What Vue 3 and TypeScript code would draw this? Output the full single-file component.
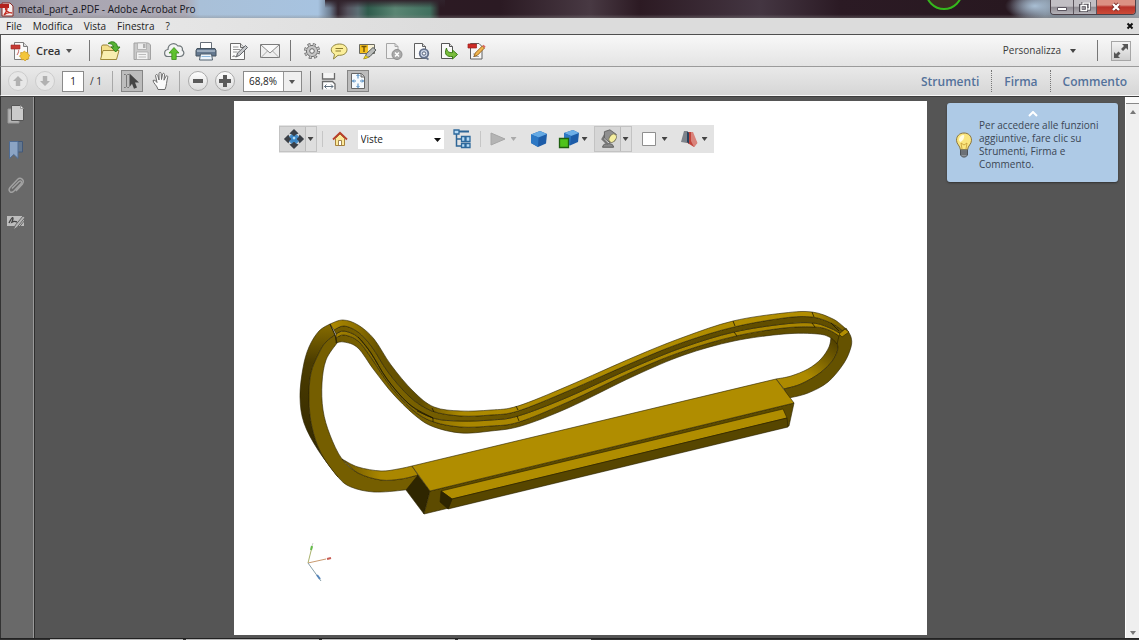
<script setup lang="ts">
import { ref } from 'vue'

type Point = [number, number]

const menus: string[] = ['File', 'Modifica', 'Vista', 'Finestra', '?']
const panes: string[] = ['Strumenti', 'Firma', 'Commento']
const pageNumber = ref('1')
const zoomLevel = ref('68,8%')
const view = ref('Viste')

/* Smooth curve through a list of points (Catmull-Rom turned into Béziers). */
function curve(points: Point[], command = 'M'): string {
  let d = `${command}${points[0].join(' ')}`
  for (let i = 0; i < points.length - 1; i++) {
    const a = points[Math.max(i - 1, 0)]
    const b = points[i]
    const c = points[i + 1]
    const e = points[Math.min(i + 2, points.length - 1)]
    const c1 = [b[0] + (c[0] - a[0]) / 6, b[1] + (c[1] - a[1]) / 6]
    const c2 = [c[0] - (e[0] - b[0]) / 6, c[1] - (e[1] - b[1]) / 6]
    d += `C${c1.map((n) => n.toFixed(1)).join(' ')} ${c2.map((n) => n.toFixed(1)).join(' ')} ${c.join(' ')}`
  }
  return d
}

function ribbon(a: Point[], b: Point[]): string {
  return `${curve(a)}${curve([...b].reverse(), 'L')}Z`
}

/* Edges of the long curved band, from its outer rim to its inner rim. */
const rim0: Point[] = [[329, 324], [342, 320], [357, 325], [373, 339], [390, 365], [412, 391], [433, 407], [460, 411], [490, 410], [517, 406], [567, 386], [633, 357], [683, 337], [732, 321], [783, 313], [811, 312], [832, 319], [844, 328]]
const rim1: Point[] = [[333, 330], [343, 326], [357, 332], [371, 347], [387, 372], [409, 397], [431, 411], [460, 416], [490, 415], [517, 411], [567, 391], [633, 362], [683, 342], [733, 327], [783, 318], [811, 317], [830, 323], [842, 331]]
const rim2: Point[] = [[335, 334], [343, 331], [357, 337], [370, 353], [386, 379], [408, 404], [432, 418], [460, 421], [490, 420], [517, 416], [567, 397], [633, 367], [683, 347], [733, 332], [783, 324], [812, 323], [829, 328], [840, 334]]
const rim3: Point[] = [[335, 338], [343, 335], [357, 341], [371, 359], [390, 387], [413, 411], [433, 422], [460, 427], [490, 426], [518, 422], [567, 402], [633, 371], [683, 351], [735, 336], [783, 328], [814, 327], [828, 330], [838, 336]]
const rim4: Point[] = [[335, 343], [343, 342], [357, 348], [373, 370], [393, 395], [416, 417], [433, 427], [460, 433], [490, 431], [520, 426], [567, 408], [633, 376], [683, 355], [733, 341], [783, 334], [817, 334], [830, 338], [836, 344]]

const leftOuter: Point[] = [[329, 324], [318, 331], [308, 347], [302, 368], [299, 397], [303, 423], [317, 450], [337, 477]]
const leftMid: Point[] = [[334, 335], [325, 342], [318, 353], [310, 373], [308, 400], [311, 427], [320, 453], [337, 477]]
const leftFace: Point[] = [...leftMid, [350, 487], [373, 492], [403, 490], [414, 487]]
const leftInner: Point[] = [[336, 343], [325, 360], [321, 383], [322, 410], [329, 435], [341, 459], [357, 473], [380, 480], [400, 479], [417, 475]]
const leftShelf: Point[] = [[341, 459], [357, 467], [380, 471], [397, 469], [411, 466]]
const leftShelfLow: Point[] = [[341, 459], [357, 473], [380, 480], [400, 479], [417, 475]]

const rightOuter: Point[] = [[845, 328], [850, 337], [850, 347], [843, 363], [827, 382], [807, 393], [788, 398]]
const rightMid: Point[] = [[832, 336], [837, 347], [832, 360], [819, 373], [800, 384], [783, 389]]
const rightInner: Point[] = [[830, 337], [828, 347], [820, 359], [807, 369], [790, 376], [775, 379]]
</script>

<template>
  <div class="window">
    <header class="titlebar">
      <svg class="app-icon" width="14" height="16" viewBox="0 0 14 16" aria-hidden="true">
        <path d="M2 2h8l3 3v10H2z" fill="#f7eeee" stroke="#8b2a25" />
        <path d="M0 3h9v4H0z" fill="#b3231d" />
        <path d="M4 14c3-4 4-8 2-7s2 5 6 5c-3-1-6 0-8 2z" fill="none" stroke="#c22c22" stroke-width="1.3" />
      </svg>
      <span class="title">metal_part_a.PDF - Adobe Acrobat Pro</span>
      <svg class="ring" width="40" height="18" viewBox="0 0 40 18" aria-hidden="true">
        <circle cx="20" cy="-9" r="18" fill="#3a2b22" stroke="#35b81c" stroke-width="2" />
      </svg>
      <div class="window-buttons">
        <button type="button" class="wb" aria-label="Riduci a icona">
          <svg width="12" height="10" viewBox="0 0 12 10"><path d="M1.500 5.500h9v3h-9z" fill="#fff" stroke="#5b5560" /></svg>
        </button>
        <button type="button" class="wb" aria-label="Ripristina">
          <svg width="12" height="10" viewBox="0 0 12 10"><path d="M4 3V1h7v6H9M1.500 3.500h6v5h-6z" fill="none" stroke="#4c4850" stroke-width="3" /><path d="M4 2.500V1h6.500v6H8.500M2 3.500h5.500v5H2z" fill="none" stroke="#fff" stroke-width="1.400" /></svg>
        </button>
        <button type="button" class="wb close" aria-label="Chiudi">
          <svg width="12" height="10" viewBox="0 0 12 10"><path d="M3 2l6 6M9 2L3 8" stroke="#7b2a24" stroke-width="4" /><path d="M3 2l6 6M9 2L3 8" stroke="#fff" stroke-width="2.400" /></svg>
        </button>
      </div>
    </header>

    <nav class="menubar" aria-label="Menu">
      <button v-for="m in menus" :key="m" type="button" class="menu">{{ m }}</button>
      <button type="button" class="doc-close" aria-label="Chiudi documento">
        <svg width="8" height="8" viewBox="0 0 8 8"><path d="M1.500 1.500l5 5M6.500 1.500l-5 5" stroke="#111" stroke-width="2" /></svg>
      </button>
    </nav>

    <div class="toolbar first">
      <button type="button" class="create">
        <svg width="20" height="20" viewBox="0 0 20 20" aria-hidden="true">
          <path d="M4.500 1.500h9l4 4v13h-13z" fill="#fafafa" stroke="#7d7d7d" />
          <path d="M13.500 1.500v4h4" fill="#ddd" stroke="#7d7d7d" />
          <path d="M1 4h9v4H1z" fill="#c63a34" stroke="#9c2a26" stroke-width=".6" />
          <path d="M7 14c2-3 2-5 1-5" fill="none" stroke="#c9605b" />
          <path d="M14.500 10l1.300 1.600 2-.3.200 2L20 14.500l-1.500 1.500.3 2-2.100.3-1.500 1.600-1.700-1.300-2 .2-.4-2L9.500 15.200l1.300-1.600-.2-2 2.100-.1z" fill="#f3c63a" stroke="#c79422" stroke-width=".7" />
        </svg>
        <span>Crea</span>
        <svg class="caret" width="6" height="4" viewBox="0 0 6 4"><path d="M0 0h6L3 4z" fill="#555" /></svg>
      </button>
      <span class="sep"></span>
      <div class="group file-group">
        <button type="button" class="tool" aria-label="Apri">
          <svg width="22" height="22" viewBox="0 0 22 22">
            <path d="M2.500 19.500V6.500l1-1.500h5l2 2h7v12z" fill="#f3df8c" stroke="#9a8339" />
            <path d="M1.500 19.500l2.500-9h16l-2.500 9z" fill="#f9eeb0" stroke="#a08a3c" />
            <path d="M9 3.500C13 0 18 2 18.500 7h2.500l-4.300 5L12 7h2.500C14 4.500 12 3.500 9 3.500z" fill="#55b233" stroke="#2c7b17" stroke-width=".9" />
          </svg>
        </button>
        <button type="button" class="tool" aria-label="Salva">
          <svg width="22" height="22" viewBox="0 0 22 22">
            <path d="M3 3h14.500L19.500 5v14.500H3z" fill="#c9c9c9" stroke="#a2a2a2" />
            <path d="M6.500 3h9v6.500h-9z" fill="#ededed" stroke="#aaa" stroke-width=".8" /><path d="M12 4h2.500v4H12z" fill="#b0b0b0" />
            <path d="M5.500 12h11.500v7.500H5.500z" fill="#f2f2f2" stroke="#aaa" stroke-width=".8" /><path d="M7.500 14.500h7.500M7.500 17h7.500" stroke="#bcbcbc" />
          </svg>
        </button>
        <button type="button" class="tool" aria-label="Carica">
          <svg width="22" height="22" viewBox="0 0 22 22">
            <path d="M5 16.500C.5 16.500.5 10 5 9.500 5 4 11.500 1.500 15 6c3-.5 5 1.500 4.300 4.200 2.500 1.500 2 6.300-2.300 6.300z" fill="#f2f3f3" stroke="#6e7679" stroke-width="1.200" />
            <path d="M11 7.500l5 5.500h-2.800v6.500H8.800V13H6z" fill="#5fc22f" stroke="#3a8d18" stroke-width=".8" />
          </svg>
        </button>
        <button type="button" class="tool" aria-label="Stampa">
          <svg width="22" height="22" viewBox="0 0 22 22">
            <path d="M5.500 9V2.500h11V9" fill="#fff" stroke="#666e78" />
            <path d="M2 8.500h18l1 2v5.500H1v-5.500z" fill="#64788f" stroke="#45535f" /><path d="M2 11h18" stroke="#aebccb" stroke-width="1.500" />
            <path d="M5.500 14h11l1 6H4.500z" fill="#eef5fb" stroke="#51606e" /><path d="M6.500 16.500h9" stroke="#8cb8df" />
          </svg>
        </button>
        <button type="button" class="tool" aria-label="Modifica testo">
          <svg width="22" height="22" viewBox="0 0 22 22">
            <path d="M3.500 3.500h10l4 4v12h-14z" fill="#fbfbfb" stroke="#6b6b6b" /><path d="M13.500 3.500v4h4" fill="#ddd" stroke="#6b6b6b" />
            <path d="M6 7h5.500M6 9.500h7M6 12h4.500" stroke="#949494" /><path d="M5.500 17c2-3 2.500 1.500 5-1" fill="none" stroke="#555" />
            <path d="M9.500 16.500l1-3.500 8-7.500 2 2-8 8z" fill="#c4c6c9" stroke="#55585c" stroke-width=".9" />
          </svg>
        </button>
        <button type="button" class="tool" aria-label="Invia per e-mail">
          <svg width="22" height="22" viewBox="0 0 22 22">
            <path d="M1.500 4.500h19v13h-19z" fill="#efefef" stroke="#7b7b7b" />
            <path d="M2 17.500l7-7M20 17.500l-7-7" stroke="#a9a9a9" /><path d="M2 5l9 8 9-8" fill="#f9f9f9" stroke="#8a8a8a" />
          </svg>
        </button>
      </div>
      <span class="sep"></span>
      <div class="group quick-group">
        <button type="button" class="tool" aria-label="Impostazioni">
          <svg width="20" height="20" viewBox="0 0 20 20">
            <circle cx="10" cy="10" r="6.400" fill="none" stroke="#707070" stroke-width="3.400" stroke-dasharray="2.800 2.227" />
            <circle cx="10" cy="10" r="5.600" fill="#c6c6c6" stroke="#707070" /><circle cx="10" cy="10" r="6.400" fill="none" stroke="#c6c6c6" stroke-width="2" stroke-dasharray="1.400 3.627" stroke-dashoffset="-.7" /><circle cx="10" cy="10" r="2.300" fill="#f4f4f4" stroke="#666" />
          </svg>
        </button>
        <button type="button" class="tool" aria-label="Nota">
          <svg width="20" height="20" viewBox="0 0 20 20">
            <path d="M10.500 3c4.500 0 7.500 2.500 7.500 5.700s-3 5.600-7.500 5.600H9L4.500 18l1-4.700C3.500 12.200 2.300 10.700 2.300 8.700 2.300 5.500 6 3 10.500 3z" fill="#fbee9a" stroke="#8e8440" />
            <path d="M6.500 7.500h7.500M6.500 10h5.500" stroke="#8a7b2e" />
          </svg>
        </button>
        <button type="button" class="tool" aria-label="Evidenzia">
          <svg width="20" height="20" viewBox="0 0 20 20">
            <path d="M2.500 3.500h15v9h-15z" fill="#f6f0d5" stroke="#6a6a62" /><path d="M3 4h8v8H3z" fill="#f4c01e" /><path d="M4.500 5.500h5M7 5.500V11" stroke="#6e5205" stroke-width="1.400" />
            <path d="M7.500 17.500l2-5 6.500-6 3 2.500-6 6.500z" fill="#b9bbb9" stroke="#565b5b" /><path d="M6.500 18l2-3.500 3 2z" fill="#f1dc20" stroke="#a49112" stroke-width=".6" />
          </svg>
        </button>
        <button type="button" class="tool" aria-label="Elimina pagina">
          <svg width="20" height="20" viewBox="0 0 20 20">
            <path d="M2.500 2.500h8.500l3 3v12h-11.500z" fill="#f1f1f1" stroke="#a6a6a6" /><path d="M11 2.500v3h3" fill="none" stroke="#a6a6a6" />
            <circle cx="13" cy="13.500" r="5" fill="#a9a9a9" stroke="#8e8e8e" /><path d="M11 11.500l4 4M15 11.500l-4 4" stroke="#fff" stroke-width="1.500" />
          </svg>
        </button>
        <button type="button" class="tool" aria-label="Azione guidata">
          <svg width="20" height="20" viewBox="0 0 20 20">
            <path d="M3.500 2.500h8l3 3v12h-11z" fill="#fafafa" stroke="#606060" /><path d="M11.500 2.500v3h3" fill="#ddd" stroke="#606060" />
            <circle cx="13" cy="12.500" r="4.300" fill="#ccd6e8" stroke="#65728c" stroke-width="1.800" /><circle cx="13" cy="12.500" r="1.700" fill="#fff" stroke="#55617a" /><path d="M14 16l3.500 2.500" stroke="#65728c" stroke-width="1.600" />
          </svg>
        </button>
        <button type="button" class="tool" aria-label="Esporta">
          <svg width="20" height="20" viewBox="0 0 20 20">
            <path d="M2.500 2.500h8l3 3v12h-11z" fill="#fafafa" stroke="#555" /><path d="M10.500 2.500v3h3" fill="#ddd" stroke="#555" />
            <path d="M7.500 7c-3 7 1 9 6 8.500V18l5-4.500-5-4.500v2.500C10 12 8 10.500 7.500 7z" fill="#79bd3c" stroke="#3b7a17" />
          </svg>
        </button>
        <button type="button" class="tool" aria-label="Modifica PDF">
          <svg width="20" height="20" viewBox="0 0 20 20">
            <path d="M4.500 2.500h8.500l3 3v12.500H4.500z" fill="#f7f7f7" stroke="#606060" /><path d="M2 3h8.500v4H2z" fill="#ce2b26" stroke="#99211d" stroke-width=".7" />
            <path d="M7 13h4M7 15.500h6" stroke="#aaa" /><path d="M8 15.500l1.300-3.500 7-7 2.200 2-7 7.200z" fill="#f0b44c" stroke="#925f1a" stroke-width=".9" /><path d="M16.300 5l1.300-1.200 2 2L18.500 7z" fill="#d9655f" />
          </svg>
        </button>
      </div>
      <button type="button" class="customize">
        <span>Personalizza</span>
        <svg width="6" height="4" viewBox="0 0 6 4"><path d="M0 0h6L3 4z" fill="#444" /></svg>
      </button>
      <span class="sep"></span>
      <button type="button" class="expand" aria-label="Modalità di lettura">
        <svg width="18" height="18" viewBox="0 0 18 18"><path d="M10 2h6v6l-2-2-3 3-2-2 3-3zM8 16H2v-6l2 2 2.500-2.500 2 2L6 14z" fill="#565656" /></svg>
      </button>
    </div>

    <div class="toolbar second">
      <button type="button" class="round off" aria-label="Pagina precedente">
        <svg width="12" height="12" viewBox="0 0 12 12"><path d="M6 1l5 5H8.200v5H3.800V6H1z" fill="#b1b1b1" /></svg>
      </button>
      <button type="button" class="round off" aria-label="Pagina successiva">
        <svg width="12" height="12" viewBox="0 0 12 12"><path d="M6 11l5-5H8.200V1H3.800v5H1z" fill="#b1b1b1" /></svg>
      </button>
      <input v-model="pageNumber" class="page-input" type="text" aria-label="Pagina" />
      <span class="page-count">/ 1</span>
      <span class="sep light"></span>
      <button type="button" class="pressed" aria-label="Strumento Selezione">
        <svg width="18" height="18" viewBox="0 0 18 18"><path d="M1 2.500h1.500l1 1 1-1H6M3.500 3v12M1 15.500h1.500l1-1 1 1H6" fill="none" stroke="#777" /><path d="M6.500 1.500l9.500 9h-4l2 5-3 1.300-2-5L6.500 15z" fill="#444" /></svg>
      </button>
      <button type="button" class="hand" aria-label="Strumento Mano">
        <svg width="18" height="20" viewBox="0 0 18 20"><path d="M6 18.500C5.500 15 1 12 1 9.500c1.500-1 3 .5 4 2L3.500 4.500c.5-1.500 2-1 2.300 0L7 9V2.500c.3-1.500 2-1.500 2.200 0l.3 6 1-5.500c.7-1.200 2-.8 2 .5L12 9.200l2-4c.8-1 2-.3 1.700 1-1 3.500-1.200 9-2.700 12.300z" fill="#fbfbfb" stroke="#6c6c6c" /></svg>
      </button>
      <span class="sep light"></span>
      <button type="button" class="round" aria-label="Zoom indietro">
        <svg width="14" height="14" viewBox="0 0 14 14"><path d="M2 5h10v4H2z" fill="#5a5a5a" /></svg>
      </button>
      <button type="button" class="round" aria-label="Zoom avanti">
        <svg width="14" height="14" viewBox="0 0 14 14"><path d="M5 1h4v4h4v4H9v4H5V9H1V5h4z" fill="#5a5a5a" /></svg>
      </button>
      <span class="zoom-box">
        <select v-model="zoomLevel" aria-label="Livello di zoom">
          <option>68,8%</option>
          <option>100%</option>
        </select>
        <svg width="6" height="4" viewBox="0 0 6 4" aria-hidden="true"><path d="M0 0h6L3 4z" fill="#555" /></svg>
      </span>
      <span class="sep"></span>
      <button type="button" class="fit" aria-label="Adatta alla larghezza">
        <svg width="18" height="20" viewBox="0 0 18 20">
          <path d="M2.500 2v6h12V2" fill="#f4f4f4" stroke="#6a6a6a" stroke-width="1.300" /><path d="M2.500 18.500v-8h10l2.500 2.500v5.500" fill="#fff" stroke="#6a6a6a" stroke-width="1.300" /><path d="M4.500 15.500h8.500M6.500 13.500l-2 2 2 2M11 13.500l2 2-2 2" fill="none" stroke="#62717f" />
        </svg>
      </button>
      <button type="button" class="pressed" aria-label="Adatta pagina">
        <svg width="18" height="18" viewBox="0 0 18 18">
          <path d="M2.500 1.500h10l3 3v12h-13z" fill="#f6fafd" stroke="#666" /><path d="M12 1.500v3.500h3.500" fill="#ccc" stroke="#666" />
          <path d="M9 2.500v4M7.500 4L9 2.500 10.500 4M9 15.500v-4M7.500 14L9 15.500l1.500-1.500M3.500 9h3.500M5 7.500L3.500 9 5 10.500M14.500 9H11M13 7.500L14.500 9 13 10.500" fill="none" stroke="#4684bd" />
        </svg>
      </button>
      <div class="panes">
        <button v-for="p in panes" :key="p" type="button" class="pane">{{ p }}</button>
      </div>
    </div>

    <main class="work">
      <aside class="rail" aria-label="Pannelli di navigazione">
        <button type="button" aria-label="Miniature pagine">
          <svg width="20" height="20" viewBox="0 0 20 20"><path d="M2 5h11v14H2z" fill="#b3b3b3" stroke="#999" /><path d="M5.500 1.500h9l3 3v12h-12z" fill="#cbcbcb" stroke="#565656" /><path d="M14.500 1.500v3h3" fill="#eee" stroke="#999" /></svg>
        </button>
        <button type="button" aria-label="Segnalibri">
          <svg width="20" height="20" viewBox="0 0 20 20"><path d="M9 1.500h7.500V12H9z" fill="#63778f" stroke="#425878" /><path d="M3.500 1.500H12v17l-4.200-4-4.300 4z" fill="#8ba4c4" stroke="#4f6c94" /></svg>
        </button>
        <button type="button" aria-label="Allegati">
          <svg width="20" height="20" viewBox="0 0 20 20"><path d="M6 12.500l7-7c2-1.500 3.500.5 2 2L8 15c-3 3-6.500 0-4-3.500l7.500-8c3-3 7.500.5 5 4.500L10 15" fill="none" stroke="#a2a2a2" stroke-width="1.400" /></svg>
        </button>
        <button type="button" aria-label="Firme">
          <svg width="20" height="20" viewBox="0 0 20 20"><path d="M1 4h17v10H1z" fill="#bdbdbd" /><path d="M3 11c4-8 5-6 3-1 2-1 3-1 5 0" fill="none" stroke="#444" stroke-width="1.400" /><path d="M7 18l2.500-5L17 4l2 1.500-8 10zM11 18l8-10" fill="#b5b5b5" stroke="#666" /></svg>
        </button>
      </aside>

      <section class="document">
        <article class="page">
          <svg class="model" viewBox="233 101 693 534" role="img" aria-label="Modello 3D">
            <defs>
              <linearGradient id="band-light" gradientUnits="userSpaceOnUse" x1="330" y1="0" x2="850" y2="0">
                <stop offset="0" stop-color="#ad8900" /><stop offset=".05" stop-color="#8d7000" /><stop offset=".09" stop-color="#695400" />
                <stop offset=".17" stop-color="#604d00" /><stop offset=".25" stop-color="#ac8900" /><stop offset=".92" stop-color="#b28e00" /><stop offset="1" stop-color="#6b5600" />
              </linearGradient>
              <linearGradient id="band-inner" gradientUnits="userSpaceOnUse" x1="330" y1="0" x2="850" y2="0">
                <stop offset="0" stop-color="#aa8700" /><stop offset=".06" stop-color="#856a00" /><stop offset=".16" stop-color="#806600" />
                <stop offset=".26" stop-color="#aa8700" /><stop offset="1" stop-color="#a98600" />
              </linearGradient>
              <linearGradient id="band-dark" gradientUnits="userSpaceOnUse" x1="330" y1="0" x2="850" y2="0">
                <stop offset="0" stop-color="#6f5900" /><stop offset=".1" stop-color="#7d6400" /><stop offset=".25" stop-color="#705a00" /><stop offset=".5" stop-color="#5d4a00" /><stop offset="1" stop-color="#624f00" />
              </linearGradient>
              <linearGradient id="left-side" gradientUnits="userSpaceOnUse" x1="0" y1="324" x2="0" y2="477">
                <stop offset="0" stop-color="#876c00" /><stop offset=".25" stop-color="#4b3c00" /><stop offset=".6" stop-color="#3c3000" /><stop offset="1" stop-color="#2e2500" />
              </linearGradient>
              <linearGradient id="right-side" gradientUnits="userSpaceOnUse" x1="836" y1="338" x2="798" y2="385">
                <stop offset="0" stop-color="#4b3c00" /><stop offset=".4" stop-color="#796100" /><stop offset=".8" stop-color="#ad8a00" />
              </linearGradient>
              <linearGradient id="shelf" gradientUnits="userSpaceOnUse" x1="341" y1="0" x2="380" y2="0">
                <stop offset="0" stop-color="#6b5500" /><stop offset="1" stop-color="#aa8700" />
              </linearGradient>
            </defs>

            <g class="solid">
              <path :d="ribbon(rightInner, rightMid)" fill="url(#right-side)" />
              <path :d="ribbon(rightOuter, rightMid)" fill="#655200" />
              <path :d="ribbon(leftOuter, leftMid)" fill="url(#left-side)" />
              <path :d="ribbon(leftFace, leftInner)" fill="#755e00" />
              <path :d="ribbon(leftShelf, leftShelfLow)" fill="url(#shelf)" />
              <path :d="ribbon(rim3, rim4)" fill="url(#band-dark)" />
              <path :d="ribbon(rim2, rim3)" fill="url(#band-inner)" />
              <path :d="ribbon(rim1, rim2)" fill="url(#band-dark)" />
              <path :d="ribbon(rim0, rim1)" fill="url(#band-light)" />
              <path d="M838 334l6-5 4 3-7 5z" fill="#b18d00" />
            </g>
            <g class="edges">
              <path :d="curve(rim2.slice(2, 7))" />
              <path d="M329 324l5 11 2 8M431 408l2 4M416 411l16 7v4M515 406l2 4M516 416l2 5M732 321l2 5M733 332l3 4M811 312l2 5M811 323l3 4M830 323l8 8" />
            </g>

            <g class="solid">
              <path d="M405 490l12-15 12 16-6 23z" fill="#2f2600" />
              <path d="M429 491l364-88-5 23-365 88z" fill="#5d4b00" />
              <path d="M411 466l364-87 18 24-364 88z" fill="#b08d00" />
              <path d="M440 491l342-82 4 9-335 81z" fill="#b08d00" />
              <path d="M451 499l335-81 1 9-340 82z" fill="#574600" />
              <path d="M440 491l11 8-4 10-8-7z" fill="#2e2500" />
            </g>

            <g class="axes">
              <path d="M307 563l4-16" stroke="#a9b26c" /><path d="M310 550l1-4" stroke="#65bb4b" stroke-width="2" />
              <path d="M311 546l1-3" stroke="#ccc" />
              <path d="M307 563l18-4" stroke="#c99a70" /><path d="M326 559l4-1" stroke="#c85c54" stroke-width="2" />
              <path d="M307 563l13 18" stroke="#879fa8" /><path d="M316 575l3 4" stroke="#5686bb" stroke-width="2" />
            </g>
          </svg>

          <div class="toolbar3d" role="toolbar" aria-label="Strumenti 3D">
            <button type="button" class="split" aria-label="Ruota">
              <svg width="22" height="22" viewBox="0 0 24 24">
                <path d="M4 12L12 4l8 8-8 8z" fill="#4a90cb" />
                <path d="M12 1l5 5-3 1-2 3-2-3-3-1zM12 23l5-5-3-1-2-3-2 3-3 1zM1 12l5-5 1 3 3 2-3 2-1 3zM23 12l-5-5-1 3-3 2 3 2 1 3z" fill="#3a3f46" />
                <circle cx="12" cy="12" r="3.500" fill="#3a86c6" /><circle cx="12" cy="11" r="1.500" fill="#b3ddf5" />
              </svg>
              <i class="tri"></i>
            </button>
            <span class="bar"></span>
            <button type="button" class="flat home" aria-label="Vista predefinita">
              <svg width="16" height="16" viewBox="0 0 16 16"><path d="M3.500 7.500L8 3l4.500 4.500v7h-9z" fill="#fbe99a" stroke="#a9823a" /><path d="M1 8.500L8 1.800l7 6.700" fill="none" stroke="#b93f2b" stroke-width="1.800" /><path d="M6.500 9.500h3v5h-3z" fill="#fff" stroke="#8c6a31" stroke-width=".8" /></svg>
            </button>
            <span class="views">
              <select v-model="view" aria-label="Viste">
                <option>Viste</option>
              </select>
              <svg width="7" height="4" viewBox="0 0 7 4" aria-hidden="true"><path d="M0 0h7L3.500 4z" fill="#111" /></svg>
            </span>
            <button type="button" class="flat tree" aria-label="Struttura del modello">
              <svg width="20" height="20" viewBox="0 0 20 20">
                <path d="M4.500 4v13h7M4.500 10h7" fill="none" stroke="#2d6596" stroke-width="1.500" /><path d="M4 2.500h13" stroke="#2d6596" stroke-width="2" />
                <path d="M2 1h5v4H2zM9.500 7.500H13v5H9.500zM14 7.500h4v5h-4zM9.500 14.500H13v4H9.500zM14 14.500h4v4h-4z" fill="#b7dbf5" stroke="#2e699c" stroke-width="1.300" />
              </svg>
            </button>
            <span class="bar"></span>
            <button type="button" class="flat play" aria-label="Riproduci animazione">
              <svg width="16" height="14" viewBox="0 0 16 14"><path d="M1 1l14 6-14 6z" fill="#b4b4b4" stroke="#a6a6a6" /></svg>
              <i class="tri dim"></i>
            </button>
            <button type="button" class="flat cube" aria-label="Proiezione">
              <svg width="18" height="18" viewBox="0 0 18 18"><path d="M1 4.500L10 1l7 3-1 9.500L8 17l-7-4z" fill="#1d5ca8" /><path d="M1 4.500L10 1l7 3-8.500 3.500z" fill="#64a9e4" /><path d="M1 4.500l7.500 3L8 17l-7-4z" fill="#2d78c4" /></svg>
            </button>
            <button type="button" class="flat render" aria-label="Modalità di rendering">
              <svg width="22" height="20" viewBox="0 0 22 20"><path d="M6 4l9-3 6 3-1 9-8 3.500L6 13z" fill="#1d5ca8" /><path d="M6 4l9-3 6 3-8 3z" fill="#6dafe8" /><path d="M6 4l7 3-1 9.500L6 13z" fill="#2d78c4" /><path d="M1.500 9.500h9v9h-9z" fill="#4fc31c" stroke="#1f5f10" stroke-width="1.300" /></svg>
              <i class="tri"></i>
            </button>
            <button type="button" class="split lamp" aria-label="Illuminazione">
              <svg width="22" height="22" viewBox="0 0 24 24">
                <path d="M5 21c0-3 3-4 6-4s6 1 6 4z" fill="#8a8a8a" stroke="#5a5a5a" /><path d="M11 18l-6-6 3-5" fill="none" stroke="#757575" stroke-width="2.500" />
                <path d="M7 4l6-2 7 5-7 9-6-5z" fill="#8f8f8f" stroke="#606060" /><ellipse cx="16" cy="11" rx="3.500" ry="5" transform="rotate(35 16 11)" fill="#f5ef9f" stroke="#77735a" />
              </svg>
              <i class="tri"></i>
            </button>
            <button type="button" class="flat swatch" aria-label="Colore di sfondo">
              <svg width="14" height="14" viewBox="0 0 14 14"><path d="M.5.5h13v13H.5z" fill="#fff" stroke="#8f8f8f" /></svg>
              <i class="tri"></i>
            </button>
            <button type="button" class="flat section" aria-label="Sezione trasversale">
              <svg width="18" height="18" viewBox="0 0 18 18"><path d="M6 2l6 0 5 11-3 4-8-5z" fill="#c2433a" /><path d="M11 2h2l4.500 11-3.500 4-3-6z" fill="#d9837b" /><path d="M4 1h3v12l-6-1z" fill="#7d838b" /><path d="M7 1l2 2v11l-2-2z" fill="#27425e" /></svg>
              <i class="tri"></i>
            </button>
          </div>
        </article>

        <aside class="tip">
          <svg class="tip-arrow" width="10" height="6" viewBox="0 0 10 6" aria-hidden="true"><path d="M1 5l4-4 4 4" fill="none" stroke="#fff" stroke-width="2" /></svg>
          <svg class="bulb" width="18" height="26" viewBox="0 0 18 26" aria-hidden="true">
            <path d="M9 1c4.500 0 7.500 3 7.500 7.300 0 4-3.500 5-4 9.700h-7C5 13.300 1.500 12.300 1.500 8.300 1.500 4 4.500 1 9 1z" fill="#fae67f" stroke="#8a7540" />
            <path d="M4 8c0-3 2-5 5-5 1 3-2 7-4 7z" fill="#fffbe0" /><path d="M7 17l-1-6 3 2 3-2-1 6" fill="none" stroke="#c49c35" stroke-width=".8" />
            <path d="M5.500 18h7v5l-2 2h-3l-2-2z" fill="#8f9499" stroke="#4d5359" /><path d="M5.500 20h7M5.500 22h7" stroke="#484d52" />
          </svg>
          <p>Per accedere alle funzioni aggiuntive, fare clic su Strumenti, Firma e Commento.</p>
        </aside>
      </section>

      <div class="scroll" aria-hidden="true">
        <span class="scroll-split"></span>
        <svg width="6" height="4" viewBox="0 0 6 4"><path d="M0 4h6L3 0z" fill="#777" /></svg>
        <svg class="down" width="6" height="4" viewBox="0 0 6 4"><path d="M0 0h6L3 4z" fill="#777" /></svg>
      </div>
    </main>
    <footer class="taskbar"><span></span><span></span><span></span><span></span></footer>
  </div>
</template>

<style>
body {
  margin: 0;
  overflow: hidden;
}
</style>

<style scoped>
.window {
  display: flex;
  flex-direction: column;
  height: 100vh;
  background: #555;
  color: #333;
  font: 10px/13px "Open Sans", "Noto Sans", sans-serif;
}
.window *,
.window *::before {
  box-sizing: border-box;
}
button {
  display: flex;
  align-items: center;
  justify-content: center;
  margin: 0;
  padding: 0;
  border: 0;
  background: none;
  color: inherit;
  font: inherit;
  flex: none;
}
svg {
  display: block;
  flex: none;
}
.titlebar {
  position: relative;
  display: flex;
  align-items: center;
  height: 18px;
  flex: none;
  padding-right: 3px;
  background:
    linear-gradient(#0000 80%, #8886),
    linear-gradient(#30222b, #30222b00) 325px 0 / 120px 8px no-repeat,
    radial-gradient(ellipse 30px 14px at 1035px 6px, #a9bfd4, #0000),
    linear-gradient(90deg, #948f9b 0, #aaa6b1 60px, #aba9b5 185px, #a9c0d8 200px, #a7c3e0 318px, #6d7d90 330px, #34262f 338px, #56545f 348px, #5b6d73 358px, #2f5b4c 368px, #5a8573 395px, #41705f 430px, #2c1a23 440px, #2b1a23 500px, #483943 590px, #2c1a23 640px, #443642 760px, #2b1a24 840px, #281820 1010px, #78828f 1045px, #9aa0a8 100%);
}
.app-icon {
  margin-right: 4px;
}
.title {
  color: #14141c;
}
.ring {
  position: absolute;
  top: 0;
  right: 175px;
}
.window-buttons {
  display: flex;
  align-self: flex-start;
  margin-left: auto;
  height: 15px;
  border: 1px solid #4a4048;
  border-top: 0;
  border-radius: 0 0 4px 4px;
  overflow: hidden;
}
.wb {
  width: 23px;
  background: linear-gradient(#c2bfc4 0 45%, #8f8b92 50%, #b5b2b8);
  border-right: 1px solid #5b545c;
}
.wb.close {
  width: 38px;
  border: 0;
  background: linear-gradient(#dc9183 0 35%, #b9332a 50%, #cb4a37);
}
.menubar {
  display: flex;
  align-items: center;
  gap: 11px;
  height: 17px;
  flex: none;
  padding: 0 5px 0 6px;
  background: linear-gradient(90deg, #ebebeb, #dcdcdc 40%);
  border-bottom: 1px solid #4f4f4f;
  color: #222;
}
.doc-close {
  margin-left: auto;
}
.toolbar {
  display: flex;
  align-items: center;
  flex: none;
  border-left: 1px solid #555;
}
.toolbar.first {
  height: 32px;
  padding: 0 8px 0 9px;
  background: linear-gradient(#f8f8f8, #e4e4e4);
  border-bottom: 1px solid #9b9b9b;
}
.toolbar.second {
  height: 29px;
  padding: 0 12px 0 7px;
  background: linear-gradient(#e9e9e9, #d6d6d6);
  border-bottom: 1px solid #f8f8f8;
}
.sep {
  width: 1px;
  height: 21px;
  flex: none;
  background: #777;
}
.sep.light {
  background: #a8a8a8;
}
.create {
  width: 79px;
  justify-content: flex-start;
  gap: 6px;
  font-size: 11px;
  font-weight: 600;
}
.group {
  display: grid;
}
.group .tool {
  width: 100%;
}
.file-group {
  grid-template-columns: repeat(6, 32px);
  margin: 0 4px;
}
.quick-group {
  width: 192px;
  grid-template-columns: repeat(7, 1fr);
  margin-left: 7px;
}
.customize {
  margin: 0 21px 0 auto;
  gap: 9px;
  color: #3a3a3a;
}
.expand {
  width: 20px;
  height: 20px;
  margin-left: 13px;
  border: 1px solid #a6a6a6;
  background: linear-gradient(#f3f3f3, #cfcfcf);
}
.round {
  width: 20px;
  height: 20px;
  margin-right: 7px;
  border: 1px solid #aaa;
  border-radius: 50%;
  background: linear-gradient(#fdfdfd, #dcdcdc);
}
.round.off {
  border-color: #ccc;
  background: #e7e7e7;
}
.sep + .round {
  margin-left: 8px;
}
.page-input {
  width: 22px;
  height: 21px;
  padding: 0;
  border: 1px solid #8a8a8a;
  background: #fff;
  color: #222;
  font: inherit;
  text-align: center;
}
.page-count {
  width: 22px;
  margin-left: 6px;
}
.pressed {
  width: 22px;
  height: 22px;
  border: 1px solid #858585;
  background: #bcbcbc;
}
.sep + .pressed {
  margin-left: 8px;
}
.hand {
  width: 36px;
}
.zoom-box {
  position: relative;
  width: 59px;
  height: 21px;
  margin: 0 8px 0 1px;
}
select {
  width: 100%;
  height: 100%;
  margin: 0;
  appearance: none;
  border-radius: 0;
  background: #fff;
  color: #222;
  font: inherit;
}
.zoom-box select {
  padding: 0 0 0 5px;
  border: 1px solid #8a8a8a;
}
.zoom-box::before {
  content: "";
  position: absolute;
  inset: 1px 1px 1px auto;
  width: 18px;
  background: #efefef;
  border-left: 1px solid #999;
  pointer-events: none;
}
.zoom-box svg {
  position: absolute;
  right: 7px;
  top: 9px;
  pointer-events: none;
}
.fit {
  width: 36px;
}
.panes {
  display: flex;
  margin-left: auto;
}
.pane {
  height: 22px;
  padding: 0 12px;
  color: #54729b;
  font-size: 12px;
  font-weight: 600;
}
.pane + .pane {
  border-left: 1px dotted #777;
}
.pane:last-child {
  padding-right: 0;
}
.work {
  display: flex;
  flex: 1;
  min-height: 0;
  border-top: 1px solid #3d3d3d;
}
.rail {
  display: flex;
  flex-direction: column;
  align-items: center;
  gap: 16px;
  width: 35px;
  flex: none;
  padding: 7px 4px 0 0;
  background: #696969;
  border-left: 1px solid #333;
  border-right: 1px solid #2e2e2e;
  box-shadow: inset -1px 0 #9a9a9a;
}
.document {
  position: relative;
  display: flex;
  justify-content: center;
  flex: 1;
  min-width: 0;
  padding: 4px 0 3px;
  background: #555;
}
.page {
  position: relative;
  height: 100%;
  aspect-ratio: 693 / 534;
  background: #fff;
}
.model {
  width: 100%;
  height: 100%;
}
.solid path {
  stroke: #2a2200;
  stroke-width: .6;
  stroke-linejoin: round;
}
.edges {
  fill: none;
  stroke: #1f1900;
  stroke-width: .8;
}
.axes path {
  fill: none;
}
.toolbar3d {
  position: absolute;
  left: 45px;
  top: 24px;
  display: flex;
  align-items: center;
  height: 28px;
  padding-right: 6px;
  background: #e3e3e3;
}
.split {
  width: 38px;
  height: 26px;
  padding-left: 3px;
  justify-content: flex-start;
  border: 1px solid #c3c3c3;
  background: linear-gradient(90deg, #d6d6d6 25px, #bbb 25px 26px, #dedede 26px);
}
.split .tri {
  margin-left: 3px;
}
.tri {
  width: 6px;
  height: 4px;
  flex: none;
  background: #444;
  clip-path: polygon(0 0, 100% 0, 50% 100%);
}
.tri.dim {
  background: #aaa;
}
.bar {
  width: 1px;
  height: 16px;
  background: #c6c6c6;
}
.split + .bar {
  margin-left: 5px;
}
.home {
  width: 35px;
}
.views {
  position: relative;
  width: 86px;
  height: 19px;
}
.views select {
  padding: 0 3px;
  border: 0;
}
.views svg {
  position: absolute;
  right: 3px;
  top: 8px;
  pointer-events: none;
}
.tree {
  width: 36px;
}
.play {
  width: 45px;
  gap: 5px;
}
.cube {
  width: 26px;
}
.render {
  width: 42px;
  gap: 2px;
}
.swatch {
  width: 46px;
  gap: 6px;
}
.section {
  width: 30px;
  gap: 4px;
  justify-content: flex-end;
}
.tip {
  position: absolute;
  top: 6px;
  right: 7px;
  display: grid;
  grid-template-columns: 18px 1fr;
  column-gap: 6px;
  align-items: center;
  width: 171px;
  height: 79px;
  padding: 7px 12px 10px 8px;
  border-radius: 3px;
  background: #aecae6;
  box-shadow: 0 1px 2px #333;
  color: #3b4654;
}
.tip-arrow {
  grid-column: 1 / 3;
  justify-self: center;
  margin-left: 4px;
}
.tip p {
  margin: 0;
}
.scroll {
  display: flex;
  flex-direction: column;
  align-items: center;
  width: 14px;
  flex: none;
  padding-bottom: 3px;
  background: #efefef;
  border-left: 1px solid #fff;
}
.scroll-split {
  width: 100%;
  height: 7px;
  margin-bottom: 6px;
  border-bottom: 1px solid #888;
  background: #fafafa;
}
.down {
  margin-top: auto;
}
.taskbar {
  display: flex;
  gap: 3px;
  height: 2px;
  flex: none;
  padding-left: 50px;
  background: #333;
  border-top: 1px solid #222;
}
.taskbar span {
  width: 133px;
  background: #bbb;
}
</style>
